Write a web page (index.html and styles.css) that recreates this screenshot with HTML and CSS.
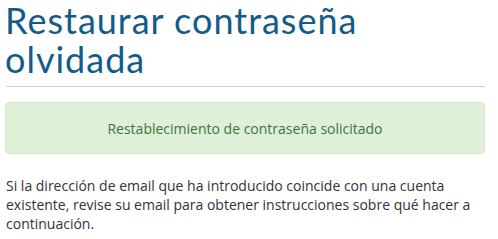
FILE: index.html
```html
<!DOCTYPE html>
<html lang="es">
<head>
<meta charset="utf-8">
<title>Restaurar contraseña olvidada</title>
<link rel="stylesheet" href="styles.css">
</head>
<body>
<main class="page">
  <h1 class="title">Restaurar contraseña<br>olvidada</h1>
  <hr class="divider">
  <div class="alert">Restablecimiento de contraseña solicitado</div>
  <p class="note">Si la dirección de email que ha introducido coincide con una cuenta existente, revise su email para obtener instrucciones sobre qué hacer a continuación.</p>
</main>
</body>
</html>
```
FILE: styles.css
```css
html, body {
  margin: 0;
  padding: 0;
  background: #fff;
}
.page {
  width: 480px;
  padding: 0 5px;
  font-family: "Open Sans", "Liberation Sans", sans-serif;
  font-size: 14px;
  line-height: 19px;
  color: #333;
}
.title {
  margin: 0;
  padding-top: 1px;
  font-family: "Lato", "Open Sans", sans-serif;
  font-weight: 400;
  font-size: 36px;
  line-height: 39px;
  color: #125b8a;
  letter-spacing: 1px;
}
.divider {
  margin: 7px 0 15px 1px;
  border: 0;
  border-top: 1px solid #cfcfcf;
  height: 0;
}
.alert {
  height: 50px;
  display: flex;
  align-items: center;
  justify-content: center;
  background: #dff0d8;
  border: 1px solid #d6e9c6;
  border-radius: 4px;
  color: #3c763d;
  font-size: 14px;
}
.note {
  margin: 22px 0 0 1px;
}
```
